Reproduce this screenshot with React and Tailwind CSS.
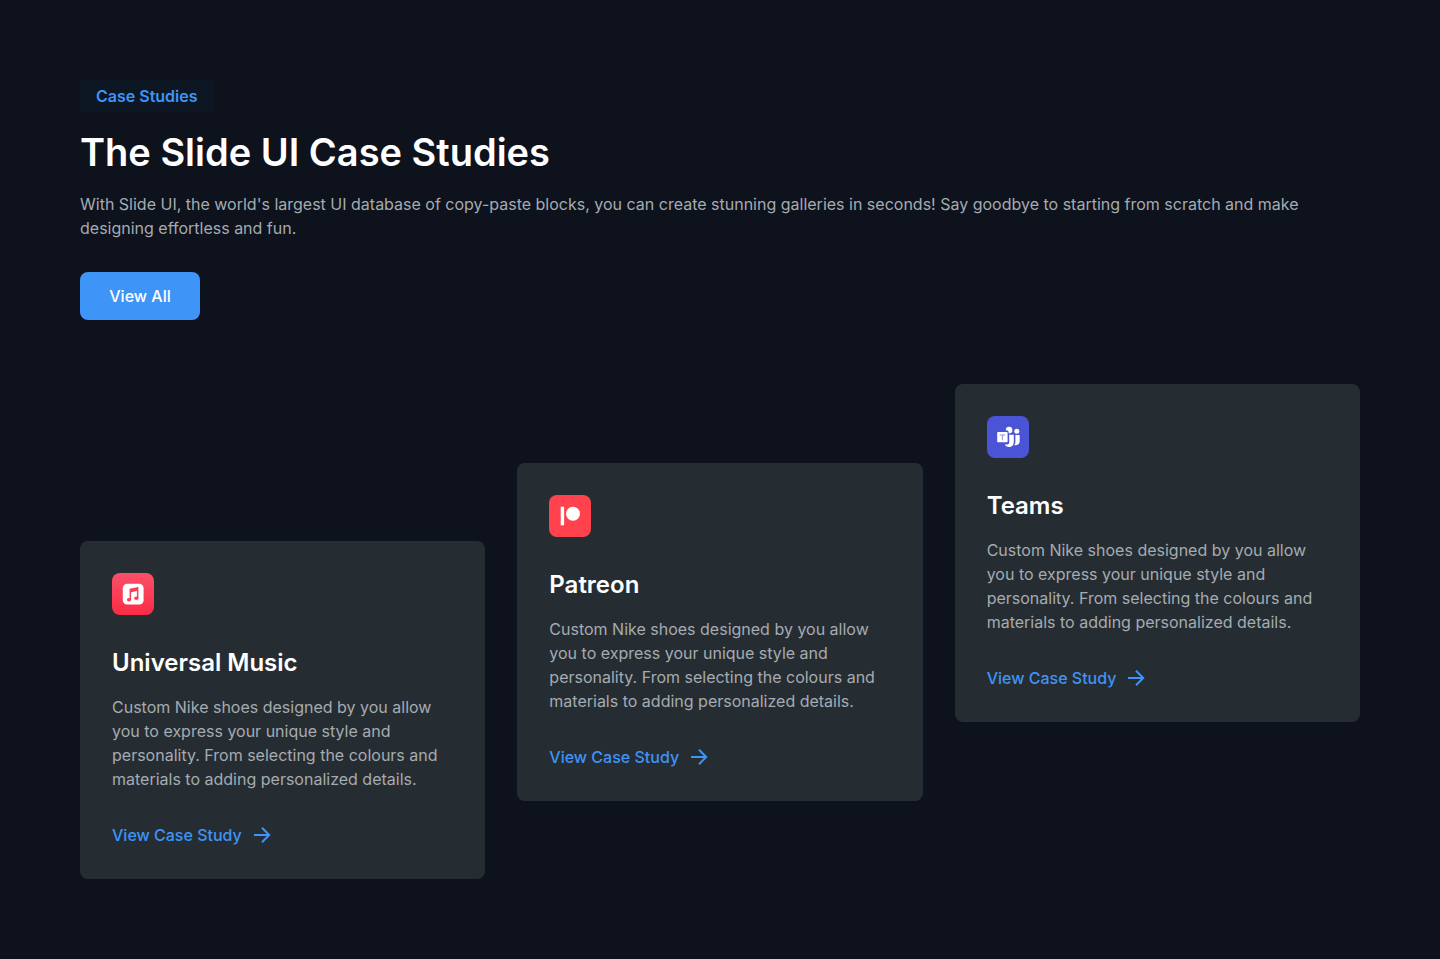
import React from "react";

function MusicIcon() {
  return (
    <svg viewBox="0 0 42 42" className="size-[42px]" aria-hidden="true">
      <defs>
        <linearGradient id="music-bg" x1="0" y1="0" x2="0" y2="1">
          <stop offset="0" stopColor="#fb5068" />
          <stop offset="1" stopColor="#fa2c44" />
        </linearGradient>
      </defs>
      <rect width="42" height="42" rx="8" fill="url(#music-bg)" />
      <rect x="10.8" y="10.8" width="20.8" height="20.8" rx="4.4" fill="#fff" />
      <g fill="#f63e55">
        <path d="M17.6 15.700 26.400 13.900v11.300h-1.500v-7.200l-5.800 1.200v7.600h-1.500z" />
        <ellipse cx="17" cy="26.800" rx="2.100" ry="1.700" />
        <ellipse cx="24.300" cy="25.200" rx="2.100" ry="1.700" />
      </g>
    </svg>
  );
}

function PatreonIcon() {
  return (
    <svg viewBox="0 0 42 42" className="size-[42px]" aria-hidden="true">
      <rect width="42" height="42" rx="8" fill="#ff424d" />
      <rect x="11.700" y="11.700" width="3.400" height="18.600" fill="#fff" />
      <circle cx="24" cy="18.800" r="7" fill="#fff" />
    </svg>
  );
}

function TeamsIcon() {
  return (
    <svg viewBox="0 0 42 42" className="size-[42px]" aria-hidden="true">
      <rect width="42" height="42" rx="8" fill="#4b53d6" />
      <path d="M18.800 14.200a3.300 3.300 0 1 1 3.700 3.100h-.9v-1.300c0-.9-.6-1.500-1.500-1.500z" fill="#fff" />
      <circle cx="29.800" cy="15.200" r="2.500" fill="#fff" />
      <path d="M28.400 19h3.300c.6 0 1 .4 1 1v5c0 2.700-1.600 4.200-4.200 4.200-.5 0-.9-.1-1.300-.2.800-1 1.200-1.900 1.200-3.100z" fill="#fff" />
      <path d="M22.200 18.800h4.600v7.200c0 3-2 5-4.800 5-2 0-3.600-.9-4.300-2.500h2.500c1.200 0 2-.8 2-2z" fill="#fff" />
      <rect x="10.200" y="16" width="10.400" height="10.200" rx="0.800" fill="#fff" />
      <path d="M12.600 18.500h5.600v1h-2.300v4.800h-1v-4.800h-2.300z" fill="#8f95ea" />
    </svg>
  );
}

function ArrowIcon() {
  return (
    <svg viewBox="0 0 24 24" className="size-6" fill="none" stroke="currentColor" strokeWidth="2" aria-hidden="true">
      <path d="M4 12h15M12 4.800 19.200 12l-7.200 7.200" />
    </svg>
  );
}

const studies = [
  { name: "Universal Music", Icon: MusicIcon, offset: "lg:mt-[157px]" },
  { name: "Patreon", Icon: PatreonIcon, offset: "lg:mt-[79px]" },
  { name: "Teams", Icon: TeamsIcon, offset: "" },
];

function StudyCard({ name, Icon, offset }) {
  return (
    <article className={`rounded-lg bg-[#262d32] p-8 ${offset}`}>
      <Icon />
      <h2 className="mt-8 text-2xl font-semibold text-white">{name}</h2>
      <p className="mt-4 text-base text-[#a5abb1]">
        Custom Nike shoes designed by you allow you to express your unique style and personality. From selecting the
        colours and materials to adding personalized details.
      </p>
      <a href="#" className="mt-8 inline-flex items-center gap-2 align-top font-medium text-[#3f94f7]">
        View Case Study
        <ArrowIcon />
      </a>
    </article>
  );
}

export default function App() {
  return (
    <main className="min-h-screen bg-[#0d121c] p-6 font-['Inter',sans-serif] text-base lg:p-20">
      <header className="flex flex-col items-start">
        <span className="rounded bg-[#0d1723] px-4 py-1 font-semibold text-[#3f94f7]">Case Studies</span>
        <h1 className="mt-4 text-[38px]/12 font-semibold text-white">The Slide UI Case Studies</h1>
        <p className="mt-4 text-[#a5abb1]">
          With Slide UI, the world's largest UI database of copy-paste blocks, you can create stunning galleries in
          seconds! Say goodbye to starting from scratch and make designing effortless and fun.
        </p>
        <button type="button" className="mt-8 h-12 w-30 rounded-lg bg-[#3f94f7] font-medium text-white">
          View All
        </button>
      </header>
      <section className="mt-16 grid items-start gap-8 lg:grid-cols-3">
        {studies.map((study) => (
          <StudyCard key={study.name} {...study} />
        ))}
      </section>
    </main>
  );
}
